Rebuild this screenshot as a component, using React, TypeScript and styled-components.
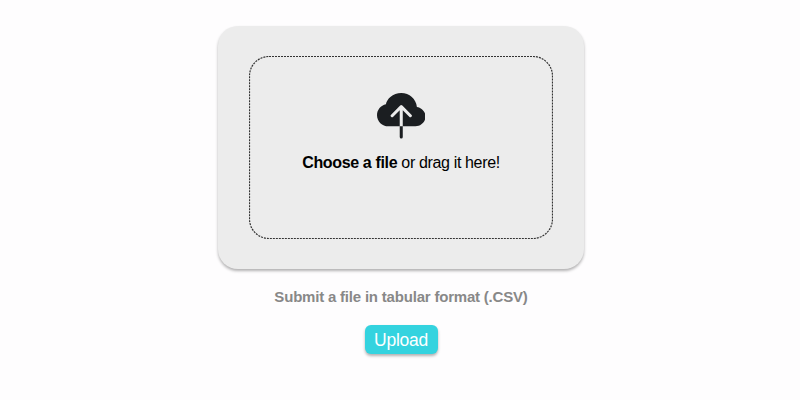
import React from "react";
import styled, { createGlobalStyle } from "styled-components";
import { BsCloudUploadFill } from "react-icons/bs";

const GlobalStyle = createGlobalStyle`
  * { box-sizing: border-box; }
  body {
    margin: 0;
    background: #fefdfe;
    font-family: "Liberation Sans", Arial, sans-serif;
  }
`;

const Page = styled.main`
  display: flex;
  flex-direction: column;
  align-items: center;
  height: 400px;
  padding: 26px 0 0 2px;
  overflow: hidden;
`;

const Card = styled.section`
  width: 366px;
  height: 243px;
  padding: 30px 31px;
  border-radius: 20px;
  background: #ececec;
  box-shadow: 0 2px 3px rgba(0, 0, 0, 0.3);
`;

const DropZone = styled.label`
  position: relative;
  display: flex;
  flex-direction: column;
  align-items: center;
  height: 183px;
  padding-top: 36.5px;
  cursor: pointer;
`;

const DashedOutline = styled.svg`
  position: absolute;
  inset: 0;
  width: 100%;
  height: 100%;
  fill: none;
  stroke: #333;
  stroke-width: 1.2px;
  stroke-dasharray: 2 1;
  pointer-events: none;
`;

const CloudIcon = styled(BsCloudUploadFill)`
  width: 48.5px;
  height: 48.5px;
  color: #1b1e21;
`;

const Prompt = styled.span`
  margin-top: 12px;
  font-size: 16px;
  line-height: 20px;
  letter-spacing: -0.35px;
  color: #000;
  white-space: nowrap;
`;

const Hint = styled.p`
  margin: 18px 0 0;
  font-size: 15px;
  font-weight: 700;
  line-height: 20px;
  letter-spacing: -0.2px;
  color: #888;
`;

const UploadButton = styled.button`
  width: 73px;
  height: 29px;
  margin-top: 18px;
  padding: 1px 0 0;
  border: 0;
  border-radius: 6px;
  background: #34d3df;
  box-shadow: 0 2px 3px rgba(0, 0, 0, 0.3);
  color: #fff;
  font: 17.5px/28px "Liberation Sans", Arial, sans-serif;
  letter-spacing: -0.25px;
  cursor: pointer;
`;

export default function App() {
  return (
    <>
      <GlobalStyle />
      <Page>
        <Card>
          <DropZone>
            <DashedOutline viewBox="0 0 304 183" aria-hidden="true">
              <rect x="0.5" y="0.5" width="303" height="182" rx="19.5" />
            </DashedOutline>
            <CloudIcon />
            <Prompt>
              <strong>Choose a file</strong> or drag it here!
            </Prompt>
          </DropZone>
        </Card>
        <Hint>Submit a file in tabular format (.CSV)</Hint>
        <UploadButton type="button">Upload</UploadButton>
      </Page>
    </>
  );
}
